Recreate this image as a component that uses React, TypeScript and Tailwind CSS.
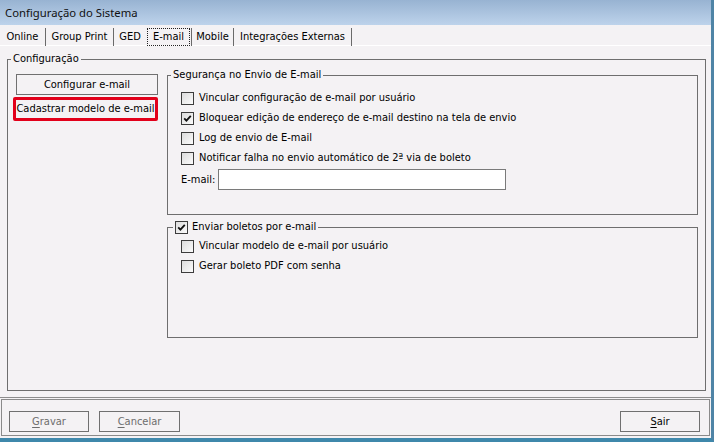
import React from "react";

const Check = ({ checked }: { checked?: boolean }) => (
  <span className="flex h-[13px] w-[13px] shrink-0 items-center justify-center border border-[#3c3c3c] bg-gradient-to-br from-[#dcdcdc] to-[#fbfbfb]">
    {checked && (
      <svg width="9" height="9" viewBox="0 0 9 9">
        <path d="M1.2 4.4 L3.4 6.6 L7.8 1.8" fill="none" stroke="#111" strokeWidth="1.8" />
      </svg>
    )}
  </span>
);

const Row = ({ label, checked }: { label: string; checked?: boolean }) => (
  <div className="flex h-[20px] items-center gap-[5px] pl-[13px]">
    <Check checked={checked} />
    <span>{label}</span>
  </div>
);

const Sep = () => <span className="h-[18px] w-px shrink-0 bg-[#6a6a6a]" />;

const App: React.FC = () => {
  return (
    <div className="flex h-[442px] w-[714px] flex-col overflow-hidden border-r-[3px] border-b-[4px] border-r-[#4f84a6] border-b-[#3f88ab] bg-[#f4f2f4] font-['DejaVu_Sans_Condensed','Liberation_Sans',sans-serif] text-[11px] leading-[14px] text-black">
      {/* title bar */}
      <div className="flex h-[25px] shrink-0 items-center bg-gradient-to-b from-[#98b3d2] to-[#bdd3eb] pl-[5px] pt-px font-['Noto_Sans',sans-serif] text-[11.3px] text-[#111]">
        Configuração do Sistema
      </div>

      {/* tabs */}
      <div className="flex h-[21px] shrink-0 items-center border-b border-white pt-[4px]">
        <span className="flex w-[45px] justify-center">Online</span>
        <Sep />
        <span className="flex w-[67px] justify-center">Group Print</span>
        <Sep />
        <span className="flex w-[32px] justify-center">GED</span>
        <span className="flex w-[45px] justify-center">
          <span className="flex h-[18px] w-[43px] items-center justify-center border border-dotted border-[#222]">
            E-mail
          </span>
        </span>
        <Sep />
        <span className="flex w-[41px] justify-center">Mobile</span>
        <Sep />
        <span className="flex w-[117px] justify-center">Integrações Externas</span>
        <Sep />
      </div>

      {/* main group */}
      <div className="shrink-0 pl-[7px] pr-[5px] pt-[6px]">
        <fieldset className="h-[339px] border border-[#6e6e6e]">
          <legend className="ml-[3px] px-[2px] leading-[14px]">Configuração</legend>
          <div className="flex">
            <div className="flex w-[159px] shrink-0 flex-col">
              <button className="ml-[8px] mt-[8px] flex h-[21px] w-[142px] items-center justify-center border border-[#707070]">
                Configurar e-mail
              </button>
              <button className="ml-[5px] mt-[2px] flex h-[24px] w-[145px] items-center justify-center rounded-[2px] border-[3px] border-[#e2001a]">
                Cadastrar modelo de e-mail
              </button>
            </div>

            <div className="mt-[2px] flex w-[531px] flex-col">
              <fieldset className="border border-[#6e6e6e] pb-[24px]">
                <legend className="ml-[3px] px-[2px] leading-[14px]">Segurança no Envio de E-mail</legend>
                <div className="mt-[6px]">
                  <Row label="Vincular configuração de e-mail por usuário" />
                  <Row label="Bloquear edição de endereço de e-mail destino na tela de envio" checked />
                  <Row label="Log de envio de E-mail" />
                  <Row label="Notificar falha no envio automático de 2ª via de boleto" />
                </div>
                <div className="mt-px flex h-[21px] items-center pl-[13px]">
                  <span className="w-[37px]">E-mail:</span>
                  <input className="h-[21px] w-[288px] border border-[#7a7a7a] bg-white px-1 outline-none" />
                </div>
              </fieldset>

              <fieldset className="mt-[5px] border border-[#6e6e6e] pb-[61px]">
                <legend className="ml-[5px] flex items-center gap-[4px] px-[2px] leading-[14px]">
                  <Check checked />
                  <span>Enviar boletos por e-mail</span>
                </legend>
                <div className="mt-[2px]">
                  <Row label="Vincular modelo de e-mail por usuário" />
                  <Row label="Gerar boleto PDF com senha" />
                </div>
              </fieldset>
            </div>
          </div>
        </fieldset>
      </div>

      {/* bottom bar */}
      <div className="mt-[6px] shrink-0 border-t border-[#8c8c8c]">
        <div className="ml-px mr-px mt-px flex h-[37px] items-start border border-[#8a8a8a] pl-[7px] pr-[9px] pt-[11px]">
          <button className="flex h-[21px] w-[80px] items-center justify-center border border-[#707070] text-[#6d6d6d]">
            <span className="underline underline-offset-2">G</span>ravar
          </button>
          <button className="ml-[10px] flex h-[21px] w-[81px] items-center justify-center border border-[#707070] text-[#6d6d6d]">
            <span className="underline underline-offset-2">C</span>ancelar
          </button>
          <button className="ml-auto flex h-[21px] w-[80px] items-center justify-center border border-[#707070]">
            <span className="underline underline-offset-2">S</span>air
          </button>
        </div>
      </div>
    </div>
  );
};

export default App;
